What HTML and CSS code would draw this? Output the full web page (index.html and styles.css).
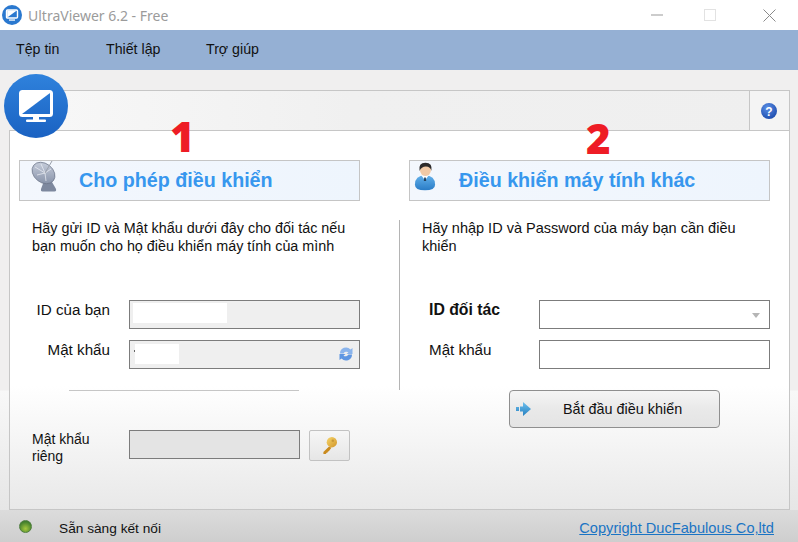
FILE: index.html
```html
<!DOCTYPE html>
<html lang="vi">
<head>
<meta charset="utf-8">
<title>UltraViewer 6.2 - Free</title>
<link rel="stylesheet" href="styles.css">
</head>
<body>
<div class="window">
  <header class="titlebar">
    <svg class="app-icon" viewBox="0 0 20 20" width="20" height="20">
      <circle cx="10" cy="10" r="10" fill="#2a78cf"/>
      <rect x="4.5" y="5" width="11" height="8" rx="1" fill="none" stroke="#fff" stroke-width="1.4"/>
      <path d="M5.200 12.400 14.800 5.600H5.200z" fill="#fff"/>
      <rect x="7" y="14.400" width="6" height="1.300" fill="#fff"/>
    </svg>
    <span class="title">UltraViewer 6.2 - Free</span>
    <div class="controls">
      <svg width="12" height="2" viewBox="0 0 12 2" class="ctl-min"><rect width="12" height="1" y="0.500" fill="#9a9a9a"/></svg>
      <svg width="12" height="12" viewBox="0 0 12 12" class="ctl-max"><rect x="0.500" y="0.500" width="11" height="11" fill="none" stroke="#e2e2e2"/></svg>
      <svg width="13" height="13" viewBox="0 0 13 13" class="ctl-close"><path d="M.5.5l12 12M12.500.5l-12 12" stroke="#8a8a8a" fill="none"/></svg>
    </div>
  </header>

  <nav class="menubar">
    <span class="menu-item m1">Tệp tin</span>
    <span class="menu-item m2">Thiết lập</span>
    <span class="menu-item m3">Trợ giúp</span>
  </nav>

  <main class="main">
    <svg class="logo" viewBox="0 0 64 64" width="64" height="64">
      <defs>
        <linearGradient id="lg" x1="0" y1="0" x2="0" y2="1"><stop offset="0" stop-color="#2f82dc"/><stop offset="1" stop-color="#1a62c2"/></linearGradient>
      </defs>
      <circle cx="32" cy="32" r="32" fill="url(#lg)"/>
      <rect x="16.500" y="17.500" width="31" height="24" rx="2" fill="none" stroke="#fff" stroke-width="3"/>
      <path d="M18 40 46 19H18z" fill="#fff"/>
      <rect x="29" y="42" width="6" height="4" fill="#fff"/>
      <rect x="22" y="45.500" width="20" height="2.500" rx="1" fill="#fff"/>
    </svg>

    <div class="tabstrip">
      <div class="help-tab">
        <svg viewBox="0 0 16 16" width="16" height="16">
          <defs><radialGradient id="hg" cx="0.4" cy="0.3" r="0.8"><stop offset="0" stop-color="#5b8fe6"/><stop offset="1" stop-color="#1746a8"/></radialGradient></defs>
          <circle cx="8" cy="8" r="8" fill="url(#hg)"/>
          <text x="8" y="12.500" class="help-q">?</text>
        </svg>
      </div>
    </div>

    <section class="panel">
      <div class="col col-left">
        <span class="annot annot-1">1</span>
        <div class="head">
          <svg class="dish" viewBox="0 0 30 32" width="30" height="32">
            <defs><linearGradient id="dg" x1="0" y1="0" x2="1" y2="1"><stop offset="0" stop-color="#d2d8e4"/><stop offset="1" stop-color="#7c88a0"/></linearGradient></defs>
            <path d="M13 20 10 28q-.5 2.500 1.500 2.500h12q2 0 1.500-2.500l-4-7z" fill="#7d889e"/>
            <ellipse cx="12.500" cy="12" rx="12.500" ry="9.500" transform="rotate(38 12.500 12)" fill="url(#dg)" stroke="#6b7488" stroke-width=".7"/>
            <path d="M4 6 14 12M10 3 14 12M20 8 14 12M6 14 14 12M14 12 15 20" stroke="#eef1f6" stroke-width=".7" fill="none"/>
            <path d="M14 12 21 0" stroke="#9aa0aa" stroke-width="1"/>
          </svg>
          <h2 class="head-text">Cho phép điều khiển</h2>
        </div>
        <p class="intro">Hãy gửi ID và Mật khẩu dưới đây cho đối tác nếu<br>bạn muốn cho họ điều khiển máy tính của mình</p>
        <div class="form">
          <div class="row">
            <label class="lbl lbl-right">ID của bạn</label>
            <div class="field field-ro"><span class="mask mask-id"></span></div>
          </div>
          <div class="row">
            <label class="lbl lbl-right">Mật khẩu</label>
            <div class="field field-ro">
              <span class="mask mask-pw"></span>
              <svg class="refresh" viewBox="0 0 16 16" width="16" height="16">
                <path d="M2 7.500A6 6 0 0 1 12.500 3.500L14.500 2v6h-6l2-1.700A3.500 3.500 0 0 0 5.500 7.500z" fill="#8ab4ec"/>
                <path d="M14 8.500A6 6 0 0 1 3.500 12.500L1.500 14V8h6l-2 1.700A3.500 3.500 0 0 0 10.500 8.500z" fill="#5e96e2"/>
              </svg>
            </div>
          </div>
        </div>
        <hr class="rule">
        <div class="private">
          <label class="lbl lbl-private">Mật khẩu<br>riêng</label>
          <div class="field field-private"></div>
          <button class="key-btn" type="button">
            <svg viewBox="0 0 16 20" width="15" height="19">
              <defs><linearGradient id="kg" x1="0" y1="0" x2="1" y2="1"><stop offset="0" stop-color="#f6d56b"/><stop offset="1" stop-color="#d2962a"/></linearGradient></defs>
              <path d="M7.500 11 1.500 17v2h2.500l1-1.200 1-.3.300-1 1-.4 2.700-3.600z" fill="#c98a1e"/>
              <circle cx="10.500" cy="6.500" r="5.500" fill="url(#kg)"/>
              <circle cx="11.500" cy="4.800" r="1.300" fill="#a9761f" opacity=".5"/>
            </svg>
          </button>
        </div>
      </div>

      <div class="col col-right">
        <span class="annot annot-2">2</span>
        <div class="head head-right">
          <svg class="user" viewBox="0 0 24 32" width="22" height="31">
            <defs><linearGradient id="ug" x1="0" y1="0" x2="0" y2="1"><stop offset="0" stop-color="#62b0ea"/><stop offset="1" stop-color="#2a7cc6"/></linearGradient></defs>
            <path d="M1 25q0-10 11-10t11 10q0 6-11 6T1 25z" fill="url(#ug)"/>
            <path d="M8 15h8l-4 5z" fill="#fff"/>
            <path d="M11.200 17h1.600l.5 4h-2.600z" fill="#24405c"/>
            <ellipse cx="12.500" cy="9" rx="6" ry="6.500" fill="#f1c9a5"/>
            <path d="M6 10q-1.500-9 6.500-9T19 10q-1-5-6-5t-7 5z" fill="#2c2a2a"/>
          </svg>
          <h2 class="head-text head-text-right">Điều khiển máy tính khác</h2>
        </div>
        <div class="right-body">
          <p class="intro intro-right">Hãy nhập ID và Password của máy bạn cần điều<br>khiển</p>
          <div class="form form-right">
            <div class="row">
              <label class="lbl lbl-left lbl-bold">ID đối tác</label>
              <div class="field field-white"><span class="caret"></span></div>
            </div>
            <div class="row">
              <label class="lbl lbl-left">Mật khẩu</label>
              <div class="field field-white"></div>
            </div>
          </div>
          <button class="start-btn" type="button">
            <svg class="arrow" viewBox="0 0 16 14" width="16" height="14">
              <defs><linearGradient id="ag" x1="0" y1="0" x2="0" y2="1"><stop offset="0" stop-color="#6fc0ee"/><stop offset="1" stop-color="#2680c0"/></linearGradient></defs>
              <path d="M0 5h3v4H0zM4 4.500h3V0l8 7-8 7V9.500H4z" fill="url(#ag)"/>
            </svg>
            <span>Bắt đầu điều khiển</span>
          </button>
        </div>
      </div>
    </section>
  </main>

  <footer class="status">
    <span class="led"></span>
    <span class="status-text">Sẵn sàng kết nối</span>
    <a class="copyright" href="#">Copyright DucFabulous Co,ltd</a>
  </footer>
</div>
</body>
</html>
```
FILE: styles.css
```css
* { box-sizing: border-box; }
html, body { margin: 0; padding: 0; }
body { font-family: "Liberation Sans", Arial, sans-serif; font-size: 14px; color: #111; overflow: hidden; }
.window { width: 798px; height: 542px; display: flex; flex-direction: column; background: #f0efef; }

.titlebar { height: 30px; background: #fff; display: flex; align-items: center; padding-left: 2px; }
.app-icon { flex: none; }
.title { margin-left: 6px; font-family: "Noto Sans", sans-serif; font-size: 14px; color: #9b9b9b; }
.controls { margin-left: auto; display: flex; align-items: center; }
.ctl-min { margin-right: 41px; }
.ctl-max { margin-right: 47px; }
.ctl-close { margin-right: 22px; }

.menubar { height: 40px; background: #95b0d4; display: flex; align-items: center; padding: 0 0 2px 16px; font-size: 14.200px; }
.menu-item { display: block; }
.m1 { width: 90px; }
.m2 { width: 100px; }

.main { position: relative; flex: 1; padding: 20px 8px 0 9px; display: flex; flex-direction: column;
  background: linear-gradient(#f0efef 0, #f0efef 320px, #f8f8f8 321px, #e6e6e6 440px); }
.logo { position: absolute; left: 4px; top: 4px; z-index: 2; }

.tabstrip { height: 41px; margin-bottom: -1px; border: 1px solid #c6c6c6; border-left: 0; border-bottom: 0;
  margin-left: 51px; display: flex; justify-content: flex-end;
  background: linear-gradient(90deg, #f7f7f7, #f0f0f0 40%, #efefef); }
.help-tab { width: 40px; height: 40px; padding-right: 1px; border-left: 1px solid #c6c6c6; background: #f4f4f4; display: flex; align-items: center; justify-content: center; }
.help-q { font: bold 12px "Liberation Sans", sans-serif; fill: #fff; text-anchor: middle; }

.panel { flex: 1; border: 1px solid #c6c6c6; display: grid; grid-template-columns: 389px 390px;
  background: linear-gradient(#fff 0, #fff 255px, #e8e8e8 380px); }

.col { position: relative; padding-top: 29px; }
.col-left { padding-left: 9px; }
.annot { position: absolute; font-family: "Open Sans", sans-serif; font-weight: 800; font-size: 42px; line-height: 42px; color: #ee1c25; }
.annot-1 { left: 160px; top: -16px; }
.annot-2 { left: 187px; top: -14px; }

.head { position: relative; width: 341px; height: 41px; border: 1px solid #c5c5c5; display: flex; align-items: center;
  background: linear-gradient(90deg, #f3f7fd, #eef5fd); padding-left: 59px; }
.head-right { width: 361px; margin-left: 10px; }
.head-text { margin: 0; font-size: 19.700px; font-weight: 700; color: #3797ee; white-space: nowrap; }
.head-text-right { margin-left: -10px; }
.dish { position: absolute; left: 11px; top: 0; }
.user { position: absolute; left: 4px; top: 0; }

.intro { margin: 0; font-size: 14.350px; line-height: 17.500px; white-space: nowrap; }
.col-left .intro { margin: 19px 0 0 13px; height: 80px; }

.form { display: flex; flex-direction: column; gap: 11px; }
.row { display: flex; align-items: flex-start; }
.lbl { display: block; font-size: 15.200px; }
.lbl-right { width: 91px; text-align: right; margin: 1px 19px 0 0; line-height: 17px; }
.field { position: relative; height: 29px; border: 1px solid #7c7c7c; width: 231px; }
.field-ro { background: #efefef; }
.field-white { background: #fff; }
.mask { position: absolute; background: #fff; top: 2px; height: 20px; }
.mask-id { left: 3px; width: 94px; }
.mask-pw { left: 5px; width: 44px; top: 3px; }
.mask-pw::before { content: ""; position: absolute; left: -1px; top: 6px; width: 1px; height: 2px; background: #666; }
.refresh { position: absolute; right: 5px; top: 5px; }
.caret { position: absolute; right: 9px; top: 12px; border: 4px solid transparent; border-top: 5px solid #b5b5b5; border-bottom: 0; }

.rule { margin: 21px 0 0 50px; width: 230px; height: 1px; border: 0; background: #c6c6c6; }
.private { display: flex; align-items: flex-start; margin-top: 39px; }
.lbl-private { width: 97px; margin: 1px 0 0 13px; font-size: 14px; line-height: 17px; }
.field-private { width: 171px; background: #e4e4e4; }
.key-btn { width: 41px; height: 31px; margin-left: 9px; padding: 0; border: 1px solid #c2c2c2; border-radius: 2px;
  background: linear-gradient(#f6f6f6, #e6e6e6); display: flex; align-items: center; justify-content: center; }

.right-body { margin-top: 19px; border-left: 1px solid #b4b4b4; height: 170px; padding-left: 22px; }
.col-right .intro-right { height: 80px; font-size: 14.500px; }
.form-right .lbl { width: 110px; margin: 1px 0 0 7px; line-height: 17px; }
.form-right .lbl-bold { font-weight: 700; font-size: 15.800px; }
.start-btn { display: flex; align-items: center; width: 211px; height: 38px; margin: 21px 0 0 87px; padding: 0 0 0 6px;
  border: 1px solid #8f8f8f; border-radius: 4px; background: linear-gradient(#f5f5f5, #e9e9e9 50%, #e4e4e4);
  font: 14.400px "Liberation Sans", sans-serif; color: #111; }
.arrow { flex: none; }
.start-btn span { margin-left: 31px; }

.status { height: 32px; padding-top: 4px; background: linear-gradient(#dcdcdc, #cecece); display: flex; align-items: center; font-size: 13.700px; }
.led { width: 13px; height: 13px; border-radius: 50%; margin: 0 0 4px 19px; background: radial-gradient(circle at 50% 70%, #a5c83e, #3f7d2c 75%); border: 1px solid #4f7d3e; }
.status-text { margin-left: 27px; }
.copyright { margin-left: auto; margin-right: 24px; font-size: 14.600px; color: #1a74c4; }
```
